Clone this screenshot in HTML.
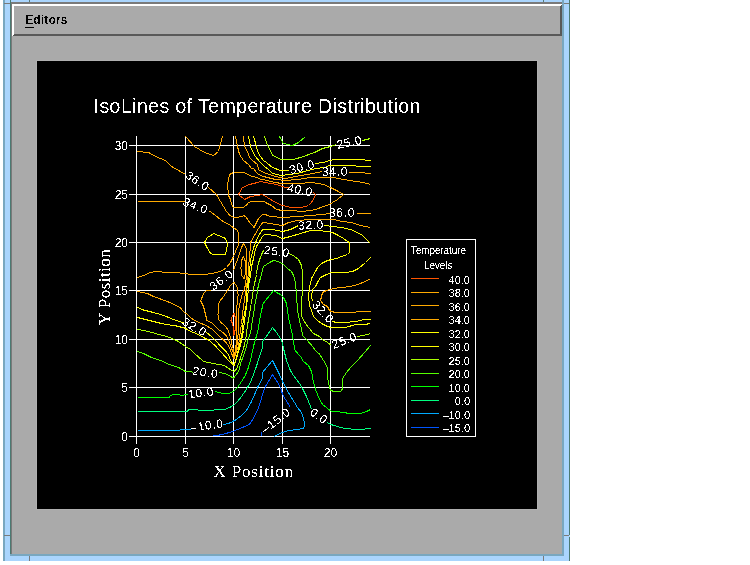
<!DOCTYPE html>
<html><head><meta charset="utf-8">
<style>
html,body{margin:0;padding:0;background:#fff;width:750px;height:565px;overflow:hidden}
svg{position:absolute;left:0;top:0;display:block}
text{font-family:"Liberation Sans",sans-serif}
</style></head><body>
<svg width="750" height="565" viewBox="0 0 750 565" shape-rendering="crispEdges">
<defs><clipPath id="plot"><rect x="136" y="136" width="234" height="301"/></clipPath><filter id="crisp" x="0" y="0" width="100%" height="100%" color-interpolation-filters="sRGB"><feComponentTransfer><feFuncA type="discrete" tableValues="0 1"/></feComponentTransfer></filter></defs>
<rect x="3" y="0" width="567" height="561" fill="#aad5fd"/>
<rect x="3" y="0" width="2" height="561" fill="#79a7bf"/>
<rect x="10" y="0" width="1" height="556" fill="#4b7a72"/>
<rect x="562" y="0" width="2" height="556" fill="#79a7bf"/>
<rect x="569" y="0" width="1" height="535" fill="#4b7a72"/>
<rect x="569" y="537" width="1" height="24" fill="#4b7a72"/>
<rect x="10" y="554" width="554" height="2" fill="#79a7bf"/>
<rect x="4" y="3" width="6" height="1" fill="#7a7a7a"/>
<rect x="29" y="0" width="1" height="2" fill="#5a7a78"/>
<rect x="543" y="0" width="1" height="2" fill="#5a7a78"/>
<rect x="564" y="3" width="5" height="1" fill="#7a7a7a"/>
<rect x="4" y="535" width="6" height="1" fill="#7a7a7a"/>
<rect x="564" y="535" width="5" height="1" fill="#7a7a7a"/>
<rect x="29" y="556" width="1" height="5" fill="#7a7a7a"/>
<rect x="543" y="556" width="1" height="5" fill="#7a7a7a"/>
<rect x="11" y="2" width="551" height="552" fill="#aaaaaa"/>
<rect x="11" y="2" width="1" height="552" fill="#7a7a7a"/>
<rect x="11" y="2" width="551" height="2" fill="#7a7a7a"/>
<polygon points="12,4 562,4 560,6 14,6 14,34 12,36" fill="#ffffff"/>
<polygon points="562,4 562,36 12,36 14,34 560,34 560,6" fill="#595959"/>
<rect x="14" y="6" width="546" height="28" fill="#aaaaaa"/>
<g filter="url(#crisp)"><text x="25.2" y="24" font-size="12" font-weight="bold" letter-spacing="0.15" fill="#000">Editors</text></g>
<rect x="25" y="27" width="9" height="1" fill="#000"/>
<rect x="36" y="60" width="502" height="450" fill="#b0b0b0"/>
<rect x="37" y="61" width="500" height="448" fill="#000"/>
<g filter="url(#crisp)"><text transform="translate(93.6,113) scale(0.93,1)" font-size="21" letter-spacing="0.45" fill="#fff">IsoLines of Temperature Distribution</text></g>
<g fill="#fff">
<rect x="136" y="136" width="1" height="308"/>
<rect x="185" y="136" width="1" height="308"/>
<rect x="233" y="136" width="1" height="308"/>
<rect x="282" y="136" width="1" height="308"/>
<rect x="330" y="136" width="1" height="308"/>
<rect x="129" y="436" width="241" height="1"/>
<rect x="129" y="387" width="241" height="1"/>
<rect x="129" y="339" width="241" height="1"/>
<rect x="129" y="290" width="241" height="1"/>
<rect x="129" y="242" width="241" height="1"/>
<rect x="129" y="194" width="241" height="1"/>
<rect x="129" y="145" width="241" height="1"/>
</g>
<g fill="none" stroke-width="1" shape-rendering="crispEdges">
<path d="M137.5,151.5 L148.5,152.5 L155.5,156.5 L165.5,160.5 L171.5,166.5 L178.5,170.5 L185.5,174.5" stroke="#ffaa00"/>
<path d="M208.5,187.5 L216.5,194.5 L220.5,201.5 L223.5,206.5 L226.5,211.5 L229.5,215 L233.5,217.5 L236.5,217.5 L241.5,216.5 L244,215.5 L246.5,217.5 L247.5,219.5 L250.5,223.5 L254.1,227.5 L255.5,224.5 L258.5,218.5 L263,214.1 L266.5,215 L270.5,216.5 L282.5,217.5 L297.5,216.5 L310.5,215.5 L322.5,214.5 L330.5,213.5" stroke="#ffaa00"/>
<path d="M356.5,213.5 L370.5,213.5" stroke="#ffaa00"/>
<path d="M185.5,136.5 L194.5,146.5 L204.5,152.5 L210.5,154.5 L213.5,155.5 L218.5,151.5 L220.5,143.5 L222.5,136.5" stroke="#ffaa00"/>
<path d="M137.5,201.5 L184.5,201.5" stroke="#ffaa00"/>
<path d="M209.5,211 L215.5,215.5 L220.5,219.5 L224,222 L227.5,223.5 L232,226.5 L234.5,228.5 L236.5,229.5 L238.5,232.5 L239,238 L238.2,245.5 L235.5,251.5 L233.5,256.5 L230.5,262.5 L226.5,267.5 L222.5,270.5 L216.5,272.5 L207.5,274.1 L194.5,274.5 L181.5,273.5 L178.5,272.5 L161.5,272 L155.5,271.5 L150.5,272.5 L143.5,275.5 L137.5,277.5" stroke="#ffaa00"/>
<path d="M288.5,187.5 L285.5,187.5 L276.5,184.5 L270.5,183.5 L260.5,181.5 L257.5,182.5 L249.5,184.5 L242.5,187.5 L238.5,194.5 L244.5,199.5 L250.5,196.5 L257.5,195.5 L262.5,194.5 L267.5,197.5 L275.5,202.5 L282.5,205.5 L291.5,207.5 L301.5,207.5 L308.5,205.5 L311.5,202.5 L314.5,197.5 L315.5,194.5 L313.5,192.5" stroke="#ff5500"/>
<path d="M235.5,136.5 L237.5,146.5 L239.5,154.5 L243.5,160.5 L248.5,164.5 L251.5,168.5 L253.5,168.5 L256.5,172.5 L258.5,174.5 L263.5,176.5 L267.5,177.5 L275.5,179.5 L285.5,180.5 L297.5,179.5 L310.5,177.5 L322.5,177.5 L335.5,177.5 L336.5,178.5 L344.5,179.5 L355.5,181.5 L363.5,182.5 L370.5,184.5" stroke="#ffaa00"/>
<path d="M243.5,136.5 L244.5,146.5 L247.5,151.5 L249.5,157.5 L252.5,160.5 L257.5,164.5 L258.5,169.5 L261.5,171.5 L266.5,173.5 L275.5,176.5 L285.5,178.5 L295.5,176.5 L307.5,174.5 L317.5,172.5 L322.5,171.5" stroke="#ffaa00"/>
<path d="M348.5,172.5 L364.5,172.5 L365.5,173.5 L370.5,173.5" stroke="#ffaa00"/>
<path d="M248.5,136.5 L250.5,146.5 L252.5,151.5 L255.5,156.5 L259.5,161.5 L264.5,166.5 L268.5,169.5 L272.5,173.5 L281.5,175.5 L288.5,174.5 L297.5,173.5 L307.5,170.5 L316.5,168.5 L324.5,167.5 L329.5,165.5 L355.5,165.5 L356.5,166.5 L370.5,166.5" stroke="#ffff00"/>
<path d="M253.5,136.5 L256.5,146.5 L257.5,151.5 L260.5,156.5 L263.5,160.5 L266.5,162.5 L272.5,167.5 L280.5,170.5 L288.5,170.5" stroke="#ffff00"/>
<path d="M315.5,163.5 L323.5,162.5 L329.5,160.5 L335.5,159.5 L364.5,159.5 L365.5,160.5 L370.5,160.5" stroke="#ffff00"/>
<path d="M264.5,136.5 L267.5,145.5 L270.5,150.5 L272.5,155.5 L281.5,159.5 L293.5,159.5 L303.5,156.5 L314.5,152.5 L322.5,148.5 L330.5,146.5 L336.5,144.5" stroke="#aaff00"/>
<path d="M362.5,140.5 L370.5,138.5" stroke="#aaff00"/>
<path d="M279.5,136.5 L283.5,143.5 L292.5,145.5 L298.5,142.5 L305.5,136.5" stroke="#55ff00"/>
<path d="M233.5,172.5 L229.5,174.5 L227.5,184.5 L228.5,195.5 L230.5,199.5 L231.5,204.5 L233.5,207.5 L238.5,207.5 L244,207 L247,204.5 L248.5,202.5 L252.5,201 L263,201 L267.5,203.5 L271.5,205.5 L276.5,209.5 L282.5,210.5 L291.5,210.5 L301.5,211.5 L310.5,210.5 L315.5,209.5 L323.5,206.5 L329.5,204.5 L332.5,202.5 L337.5,199.5 L343.5,194.5 L336.5,190.5 L330.5,187.5 L323.5,184.5 L312.5,182.5 L297.5,183.5 L282.5,183.5 L274.5,182.5 L267.5,180.5 L261.5,179.5 L256.5,177.5 L249.5,175.5 L244.5,172.5 L238.5,172.5 L233.5,172.5" stroke="#ffaa00"/>
<path d="M250.5,245.5 L251,241.5 L254.1,236.2 L257.5,230 L261.2,224.5 L263,222 L266.5,222.9 L270.5,223.5 L275.5,224.5 L282.5,225.5 L288.5,222.5 L297.5,220.5 L310.5,219.5 L322.5,219.5 L334.5,219.5 L341.5,221.5 L351.5,222.5 L360.5,225.5 L370.5,227.5" stroke="#ffaa00"/>
<path d="M298.5,225.5 L290.5,229.5 L282.5,231.5 L272.5,229.5 L267.5,229.1 L263,229.5 L260.5,232.5 L257.5,238 L254.3,245.5 L252.8,250.5 L251,258.5 L250,266.5 L249.3,274.5 L248.5,280.5 L247.1,287.1 L246.5,295.5 L246.1,306.1 L244.5,313.5 L243.2,320.5 L242.5,330.5 L239.5,345.5 L234.2,365.5" stroke="#ffff00"/>
<path d="M324.5,225.5 L332.5,226.5 L341.5,227.5 L350.5,229.5 L357.5,232.5 L362.5,235.5 L366.5,239.5 L370.5,243.5" stroke="#ffff00"/>
<path d="M234.2,365.5 L240.5,345.5 L243.5,330.5 L244.5,320.5 L245.5,313.9 L246.5,306.1 L247.8,295.5 L248.7,284.5 L249.9,279.2 L250.7,273.5 L251.5,266.5 L253.5,258.5 L255.2,250.5 L257,245.5 L259.5,241.5 L262.1,237.1 L263.9,234.9 L270.5,234.9 L275.5,235.5 L282.5,238.5 L290.5,236.5 L300.5,233.5 L310.5,230.5 L318.5,230.5 L326.5,231.5 L332.5,232.5 L336.5,234.5 L343.5,238.5 L347.5,241.5 L349.5,242.5 L349.5,252.5 L347.5,254.5 L341.5,256.5 L336.5,258.5 L331.5,259.5 L327.5,260.5 L321.5,263.5 L317.5,267.5 L315.5,271.5 L311.5,278.5 L309.5,287.5 L308.5,296.5 L309.5,305.5 L311.5,310.5 L313.5,316.5 L318,321 L321.5,323.5 L327.5,326.5 L331.5,327.5 L345.5,327.5 L355.5,324.5 L364.5,324.5 L370.5,323.5" stroke="#ffff00"/>
<path d="M370.5,257.5 L365.5,262.5 L358.5,268.5 L352.5,271.5 L345.5,272.5 L331.5,272.5 L326.5,274.5 L320.5,277.5 L317.5,282.5 L315.5,286.5 L312.5,289.5 L311.5,296.5 L312.5,301.5" stroke="#ffff00"/>
<path d="M332.5,321.5 L336.5,322.5 L345.5,322.5 L355.5,321.5 L364.5,319.5 L370.5,319.5" stroke="#ffff00"/>
<path d="M370.5,278.5 L365.5,281.5 L357.5,284.5 L350.5,286.5 L341.5,287.5 L333.5,288.5 L326.5,290.5 L322.5,292.5 L321.5,296.5 L320.5,300.5 L323.5,304.5 L327.5,306.5 L329.5,310.5 L331.5,311.5 L335.5,312.5 L347.5,312.5 L355.5,312.5 L356.5,311.5 L370.5,311.5" stroke="#ffaa00"/>
<path d="M204.5,242.5 L207.5,237.5 L214,233.5 L218.5,235.5 L224.5,238 L226.5,240.5 L227.5,244 L226.5,249.5 L225.5,254.5 L214,255 L210.5,253.1 L207.5,248.5 L204.5,242.5" stroke="#ffff00"/>
<path d="M243.5,256.5 L241.5,260.5 L240.9,268 L241.5,275.2 L244,278.5 L245.2,274.5 L245.2,260.9 L243.5,256.5" stroke="#ffaa00"/>
<path d="M232.5,270.5 L234.5,268.5 L235.5,264.5 L237.3,260.1 L239.3,254.5 L241.5,247.5 L243.5,243.5 L246,247.5 L246.5,257.5 L246.8,266.5 L246.5,275.5 L245.5,284.5 L244.5,288.5 L241.7,295.5 L239.7,304.5 L238.6,309.5 L238.5,330.5 L237,345.5 L234,358.5" stroke="#ffaa00"/>
<path d="M210.5,290 L206.1,290.9 L203.5,293.5 L201.5,298.9 L200.5,300.5 L203.5,306.5 L205.5,314.5 L207,320.5 L211.5,322.5 L214.5,325.5 L218.5,329.5 L223,332.5 L226.1,335.5 L228.5,339.5 L230.5,345.5 L233.5,353.5 L234,358.5" stroke="#ffaa00"/>
<path d="M250.5,245.5 L250,251.1 L249.2,258.5 L248.8,266.5 L248,276.5 L246.5,286.5 L244.5,299.5 L242.9,311.1 L241.5,324.5 L240.5,330.5 L238.5,345.5 L234,358.5" stroke="#ffaa00"/>
<path d="M234,358.5 L233.5,349.5 L231.5,343 L230.5,337.5 L228.5,331.5 L227.5,328.9 L225.1,326 L221.5,323 L218.5,319.5 L218,314.5 L218.2,309 L218.5,304.1 L219.9,301 L223.5,296.5 L227.5,290.5 L230.5,285.5 L234,282 L235.5,284.5 L237.5,287.5 L238.1,295.5 L237,305.5 L236.8,330.5 L236,345.5 L234,358.5" stroke="#ffaa00"/>
<path d="M137.5,291.5 L142,292.5 L147.5,293.5 L153.5,296.5 L160.5,299 L167.5,301.5 L173.1,304.2 L180,307.5 L184.5,312.5 L187.5,314.5 L191.1,318 L196.5,321.5 L201.5,323.5 L207,326 L212.5,329.5 L216.5,333.5 L220.5,337.5 L223,339.5 L226.1,342.5 L229.5,347.5 L231.5,353.5 L234,358.5" stroke="#ffaa00"/>
<path d="M234,313.5 L231.5,317.5 L231,320.5 L232.5,323.5 L233.5,327.5 L234,335.5 L235,330.5 L235,316.5 L234,313.5" stroke="#ff5500"/>
<path d="M137.5,307.5 L143.5,310 L153.5,312.5 L160.5,314.5 L166.5,316.5 L173.1,319.5 L181.5,322.1 L183.5,322.1" stroke="#ffff00"/>
<path d="M206.5,332.5 L211.5,336.5 L215.5,340.5 L220.5,346.1 L225.1,350.5 L228.5,354.5 L230.5,360.5 L234.2,365.5" stroke="#ffff00"/>
<path d="M137.5,317.5 L145.5,319.5 L153.5,321.5 L161.5,323.5 L168.5,324.9 L174.5,325.5 L184.5,328 L191.1,331.5 L198.5,334.5 L203.5,337.5 L209.5,340.5 L215.5,346.1 L220.5,351.5 L225.1,356.5 L228.5,360.5 L234.2,365.5" stroke="#ffff00"/>
<path d="M137.5,329.5 L143.5,330.5 L148.5,331.5 L155.5,333.5 L165,336 L173.1,338.9 L178.5,341.5 L185.5,346.5 L190.5,349.5 L194.5,353.5 L203.5,361.5 L213.5,363.5 L224.5,365.5 L229.5,369 L234,371.5 L236.5,368.9 L239.1,362.5 L241.5,354.5 L244.5,345 L246.2,336.1 L246.8,330.5 L247.5,324.5 L248.5,320.5 L249.5,313.9 L250.5,308.2 L251.5,301.1 L252.8,295.5 L253.2,289.5 L254.8,282.5 L256.5,274.5 L257.5,266.5 L259.5,260 L261.5,254.5 L263.5,250.5" stroke="#aaff00"/>
<path d="M289.5,253.5 L294.5,256.5 L298.5,259.5 L301,264.5 L302.5,271.5 L302.5,290.5 L301.5,302.5 L301.5,310.5 L301.5,316.5 L305,322.5 L308.5,327.5 L313.5,333.5 L319.5,336.5 L322.5,339.5 L327.5,342.5 L331.5,345.5" stroke="#aaff00"/>
<path d="M357.5,336.5 L363.5,335.5 L370.5,333.5" stroke="#aaff00"/>
<path d="M137.5,351.5 L143.5,353.5 L151.5,357.5 L160.5,360.5 L169.5,364.5 L178.5,367.5 L185.5,371.5 L193.5,372.1" stroke="#55ff00"/>
<path d="M219.5,372.5 L225.9,374 L230.2,376.1 L233.5,378.2 L238.5,371.5 L240.9,362.5 L243.5,355.5 L246.2,347.5 L248.5,338.5 L251,330.5 L252.1,322.5 L253.2,316 L254.2,309.5 L255.3,302.5 L256.8,295.5 L258,287.5 L259.5,281.2 L261.1,275.9 L262.5,270.5 L263.5,266.5 L266.5,264.5 L270.5,262 L273.5,260.5 L276.5,261.1 L280.5,262.5 L283.5,264.5 L287.5,268.5 L291.5,271.5 L293.5,275.5 L295.5,282.5 L296.5,294.5 L297.5,310.5 L299.5,320.5 L301.5,329.1 L302.5,335.5 L306.5,339.5 L311.5,345.2 L316.2,351.5 L319.5,354 L323.5,360.5 L326.5,365.5 L327.5,368.5 L327.5,376.5 L328.5,382.5 L329.5,387.5 L330.5,390.5 L334.5,391.5 L336.5,392 L340.5,391.5 L342.5,389 L342.5,378.5 L344.5,375.5 L346.5,372.5 L351.5,366.5 L357.5,360.5 L364.5,352.5 L370.5,345.5" stroke="#55ff00"/>
<path d="M137.5,397.5 L141.1,397.5 L142.5,397 L169.5,397 L170.5,395.5 L174,394.5 L179.5,394.5 L180.5,395.5 L188.5,394.5" stroke="#00ff00"/>
<path d="M215.5,391.5 L221,393.1 L224.5,393.5 L229.5,393.1 L233.5,391.5 L237.2,388.1 L241.5,381.5 L245,376.1 L247.9,369 L250.5,360.5 L251.5,355.1 L254.5,342.5 L257.5,332.5 L259.5,321.5 L260.5,315.5 L263,304 L267,298.5 L270.5,294.5 L273.5,290.5 L276.5,292.5 L280.5,294.5 L283.5,297.5 L286,302.5 L287.5,309.5 L288.5,317.5 L290.5,326.5 L292.5,335.5 L293.5,342.5 L295.1,350.5 L300.5,356.5 L303.5,361.5 L308.5,365.5 L311.5,371.5 L313.1,380.5 L314.5,385.5 L316.2,391.5 L319.5,399 L322.5,404.5 L326.5,407.5 L330.5,411 L335.5,411.5 L343.5,412.5 L349.5,413.5 L360.5,413.5 L363.5,412.5 L366.5,411.5 L370.5,409.5" stroke="#00ff00"/>
<path d="M137.5,411.5 L161.5,411.5 L161.5,411 L187.5,411 L188.5,410 L193.1,409.5 L199,410.1 L204.5,410.5 L211.5,410.1 L224.5,409.5 L230.2,407.2 L234.5,404.5 L240.1,398.5 L245,391.5 L250,383.2 L253.5,374.5 L256.5,366.2 L259.2,357.5 L262.5,347.5 L262.5,341.5 L264.5,339 L269.1,332.5 L272.5,327.5 L276.5,332.5 L280.5,338.5 L282.5,343.5 L284,350.5 L286.5,360.5 L290.2,370 L293.5,375.5 L300.1,384.2 L303.5,390.5 L306.5,396.5 L309.5,404 L311.5,409" stroke="#00ff80"/>
<path d="M327.5,422.5 L330.5,424.5 L334.5,425.5 L340.5,427.5 L345.5,428.5 L355.5,429.5 L364.5,429.5 L365.5,428.5 L370.5,428.5" stroke="#00ff80"/>
<path d="M137.5,430.5 L179.5,430.5 L180.5,429.5 L190.5,429.5" stroke="#00aaff"/>
<path d="M223.5,424.9 L230.2,422.8 L235.5,420 L241.5,415.5 L247.2,409.5 L251.5,401.5 L254.2,395.5 L257.5,387.5 L261.5,380.5 L262.5,377.5 L262.5,372.5 L267.5,366.5 L272.5,360.5 L275.5,366.5 L279,373.5 L282.5,381.5 L286.5,389.1 L290.2,395.5 L293.9,401.5 L297.5,407.5 L301.5,412.5 L303.5,418.9 L305,425.1 L303.5,428.2 L297.5,429.5 L288.9,430.5 L282.5,432.5 L277.5,434.5 L274.5,436.5" stroke="#00aaff"/>
<path d="M212.5,435.5 L217.5,435.5 L225.9,433.5 L233,431.3 L240.1,428.5 L248.5,424.9 L250.5,423.2 L254.2,416.5 L257.9,409 L261,400.5 L262.5,394.1 L265.5,386.5 L269.1,380.5 L272.5,374.5 L274.5,378 L276.5,380.5 L280.5,387.5 L282.5,394.1 L285.2,399 L287.5,402.5 L290.2,407.5" stroke="#0055ff"/>
<path d="M261.5,432.5 L261,436.2" stroke="#0055ff"/>
</g>
<g clip-path="url(#plot)"><g fill="#fff" font-size="12" letter-spacing="0.65" filter="url(#crisp)">
<text transform="translate(197.5,181) rotate(33)" y="4" text-anchor="middle">36.0</text>
<text transform="translate(195.5,206) rotate(21)" y="4" text-anchor="middle">34.0</text>
<text transform="translate(300,190) rotate(12)" y="4" text-anchor="middle">40.0</text>
<text transform="translate(302,167) rotate(-15)" y="4" text-anchor="middle">30.0</text>
<text transform="translate(335,172) rotate(0)" y="4" text-anchor="middle">34.0</text>
<text transform="translate(349.5,142.5) rotate(-12)" y="4" text-anchor="middle">25.0</text>
<text transform="translate(342,213) rotate(0)" y="4" text-anchor="middle">36.0</text>
<text transform="translate(311,225) rotate(-3)" y="4" text-anchor="middle">32.0</text>
<text transform="translate(277,251.5) rotate(8)" y="4" text-anchor="middle">25.0</text>
<text transform="translate(323,312) rotate(47)" y="4" text-anchor="middle">32.0</text>
<text transform="translate(344.5,340.5) rotate(-21)" y="4" text-anchor="middle">25.0</text>
<text transform="translate(319,416) rotate(35)" y="4" text-anchor="middle">0.0</text>
<text transform="translate(276,420.5) rotate(-38)" y="4" text-anchor="middle">–15.0</text>
<text transform="translate(221.5,280) rotate(-37)" y="4" text-anchor="middle">36.0</text>
<text transform="translate(194.5,327) rotate(30)" y="4" text-anchor="middle">32.0</text>
<text transform="translate(205.5,372.5) rotate(8)" y="4" text-anchor="middle">20.0</text>
<text transform="translate(201,393) rotate(-8)" y="4" text-anchor="middle">10.0</text>
<text transform="translate(207,425.5) rotate(-8)" y="4" text-anchor="middle">–10.0</text>
</g></g>
<g fill="#fff" font-size="12" text-anchor="end" filter="url(#crisp)">
<text x="128" y="150">30</text>
<text x="128" y="199">25</text>
<text x="128" y="247">20</text>
<text x="128" y="295">15</text>
<text x="128" y="344">10</text>
<text x="128" y="392">5</text>
<text x="128" y="441">0</text>
</g>
<g fill="#fff" font-size="12" text-anchor="middle" filter="url(#crisp)">
<text x="136.5" y="457">0</text>
<text x="185.5" y="457">5</text>
<text x="233.5" y="457">10</text>
<text x="282.5" y="457">15</text>
<text x="330.5" y="457">20</text>
</g>
<g filter="url(#crisp)">
<text x="213.5" y="477" font-size="17" letter-spacing="0.82" fill="#fff" style="font-family:'Liberation Serif',serif">X Position</text>
<text transform="translate(110,325) rotate(-90)" font-size="17" letter-spacing="0.45" fill="#fff" style="font-family:'Liberation Serif',serif">Y Position</text>
</g>
<rect x="406" y="239" width="69" height="197" fill="none" stroke="#fff" transform="translate(0.5,0.5)"/>
<g fill="#fff" font-size="11" filter="url(#crisp)">
<text transform="translate(411,254) scale(0.89,1)">Temperature</text>
<text transform="translate(424,269) scale(0.89,1)">Levels</text>
</g>
<g>
<rect x="411" y="278" width="28" height="1" fill="#ff5500"/>
<rect x="411" y="292" width="28" height="1" fill="#ffaa00"/>
<rect x="411" y="305" width="28" height="1" fill="#ffaa00"/>
<rect x="411" y="319" width="28" height="1" fill="#ffaa00"/>
<rect x="411" y="332" width="28" height="1" fill="#ffff00"/>
<rect x="411" y="346" width="28" height="1" fill="#ffff00"/>
<rect x="411" y="359" width="28" height="1" fill="#aaff00"/>
<rect x="411" y="373" width="28" height="1" fill="#55ff00"/>
<rect x="411" y="386" width="28" height="1" fill="#00ff00"/>
<rect x="411" y="400" width="28" height="1" fill="#00ff80"/>
<rect x="411" y="413" width="28" height="1" fill="#00aaff"/>
<rect x="411" y="427" width="28" height="1" fill="#0055ff"/>
</g>
<g fill="#fff" font-size="11" text-anchor="end" filter="url(#crisp)">
<text x="470" y="284">40.0</text>
<text x="470" y="297">38.0</text>
<text x="470" y="311">36.0</text>
<text x="470" y="324">34.0</text>
<text x="470" y="338">32.0</text>
<text x="470" y="351">30.0</text>
<text x="470" y="365">25.0</text>
<text x="470" y="378">20.0</text>
<text x="470" y="392">10.0</text>
<text x="470" y="405">0.0</text>
<text x="470" y="419">&#8211;10.0</text>
<text x="470" y="432">&#8211;15.0</text>
</g>
</svg>
</body></html>
